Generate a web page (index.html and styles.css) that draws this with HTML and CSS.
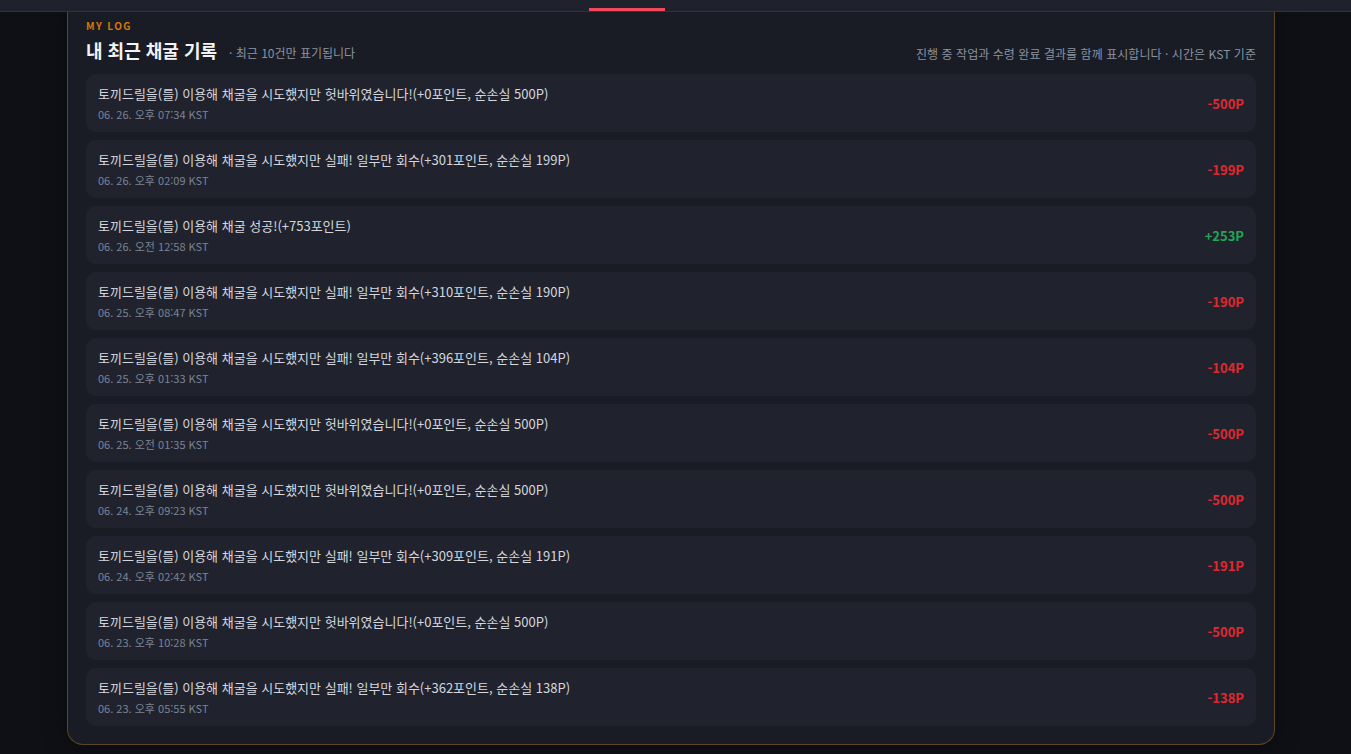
FILE: index.html
```html
<!DOCTYPE html>
<html lang="ko">
<head>
<meta charset="utf-8">
<link rel="stylesheet" href="styles.css">
</head>
<body>
<header class="topbar"><span class="tab-indicator"></span></header>
<main class="page">
  <section class="panel">
    <div class="eyebrow">MY LOG</div>
    <div class="panel-head">
      <div class="title-wrap">
        <h2 class="title">내 최근 채굴 기록</h2>
        <span class="subtitle">· 최근 10건만 표기됩니다</span>
      </div>
      <div class="note">진행 중 작업과 수령 완료 결과를 함께 표시합니다 · 시간은 KST 기준</div>
    </div>
    <ul class="log-list">
      <li class="log-row"><div class="log-info"><div class="log-msg">토끼드릴을(를) 이용해 채굴을 시도했지만 헛바위였습니다!(+0포인트, 순손실 500P)</div><div class="log-time">06. 26. 오후 07:34 KST</div></div><div class="amount neg">-500P</div></li>
      <li class="log-row"><div class="log-info"><div class="log-msg">토끼드릴을(를) 이용해 채굴을 시도했지만 실패! 일부만 회수(+301포인트, 순손실 199P)</div><div class="log-time">06. 26. 오후 02:09 KST</div></div><div class="amount neg">-199P</div></li>
      <li class="log-row"><div class="log-info"><div class="log-msg">토끼드릴을(를) 이용해 채굴 성공!(+753포인트)</div><div class="log-time">06. 26. 오전 12:58 KST</div></div><div class="amount pos">+253P</div></li>
      <li class="log-row"><div class="log-info"><div class="log-msg">토끼드릴을(를) 이용해 채굴을 시도했지만 실패! 일부만 회수(+310포인트, 순손실 190P)</div><div class="log-time">06. 25. 오후 08:47 KST</div></div><div class="amount neg">-190P</div></li>
      <li class="log-row"><div class="log-info"><div class="log-msg">토끼드릴을(를) 이용해 채굴을 시도했지만 실패! 일부만 회수(+396포인트, 순손실 104P)</div><div class="log-time">06. 25. 오후 01:33 KST</div></div><div class="amount neg">-104P</div></li>
      <li class="log-row"><div class="log-info"><div class="log-msg">토끼드릴을(를) 이용해 채굴을 시도했지만 헛바위였습니다!(+0포인트, 순손실 500P)</div><div class="log-time">06. 25. 오전 01:35 KST</div></div><div class="amount neg">-500P</div></li>
      <li class="log-row"><div class="log-info"><div class="log-msg">토끼드릴을(를) 이용해 채굴을 시도했지만 헛바위였습니다!(+0포인트, 순손실 500P)</div><div class="log-time">06. 24. 오후 09:23 KST</div></div><div class="amount neg">-500P</div></li>
      <li class="log-row"><div class="log-info"><div class="log-msg">토끼드릴을(를) 이용해 채굴을 시도했지만 실패! 일부만 회수(+309포인트, 순손실 191P)</div><div class="log-time">06. 24. 오후 02:42 KST</div></div><div class="amount neg">-191P</div></li>
      <li class="log-row"><div class="log-info"><div class="log-msg">토끼드릴을(를) 이용해 채굴을 시도했지만 헛바위였습니다!(+0포인트, 순손실 500P)</div><div class="log-time">06. 23. 오후 10:28 KST</div></div><div class="amount neg">-500P</div></li>
      <li class="log-row"><div class="log-info"><div class="log-msg">토끼드릴을(를) 이용해 채굴을 시도했지만 실패! 일부만 회수(+362포인트, 순손실 138P)</div><div class="log-time">06. 23. 오후 05:55 KST</div></div><div class="amount neg">-138P</div></li>
    </ul>
  </section>
</main>
</body>
</html>
```

FILE: styles.css
```css
* { box-sizing: border-box; }
html, body { margin: 0; padding: 0; }
body {
  background: #0e1015;
  font-family: "Noto Sans CJK KR", "Noto Sans", sans-serif;
  color: #d4d7de;
  height: 754px;
  overflow: hidden;
}
.topbar {
  position: fixed;
  top: 0; left: 0; right: 0;
  height: 12px;
  background: #1f222d;
  border-bottom: 1px solid #2f3341;
  z-index: 10;
}
.tab-indicator {
  position: absolute;
  left: 589px;
  top: 8px;
  width: 76px;
  height: 3px;
  background: #f4485c;
}
.page {
  padding: 0 76px 0 67px;
}
.panel {
  background: #191c24;
  border: 1px solid #5e4622;
  border-top: none;
  border-radius: 0 0 16px 16px;
  padding: 19px 18px 18px 18px;
  box-shadow: 0 0 24px rgba(0,0,0,0.35);
}
.eyebrow {
  color: #d9770a;
  font-size: 10px;
  font-weight: 700;
  letter-spacing: 1.4px;
  line-height: 14px;
}
.panel-head {
  display: flex;
  justify-content: space-between;
  align-items: flex-end;
  margin-top: 4px;
  margin-bottom: 11px;
}
.title-wrap {
  display: flex;
  align-items: baseline;
  gap: 12px;
}
.title {
  margin: 0;
  font-size: 18px;
  font-weight: 700;
  color: #f3f4f6;
  line-height: 26px;
}
.subtitle {
  font-size: 12px;
  color: #8a92a1;
}
.note {
  font-size: 12px;
  color: #8a92a1;
  line-height: 18px;
  letter-spacing: 0.05px;
}
.log-list {
  list-style: none;
  margin: 0;
  padding: 0;
  display: flex;
  flex-direction: column;
  gap: 8px;
}
.log-row {
  display: flex;
  justify-content: space-between;
  align-items: center;
  background: #20232e;
  border-radius: 10px;
  height: 58px;
  padding: 0 12px;
}
.log-info {
  display: flex;
  flex-direction: column;
  gap: 2px;
}
.log-msg {
  font-size: 13px;
  line-height: 20px;
  color: #d4d7de;
}
.log-time {
  font-size: 11px;
  line-height: 16px;
  color: #7b8495;
}
.amount {
  font-size: 13px;
  font-weight: 700;
}
.neg { color: #e0282e; }
.pos { color: #22a652; }
```
